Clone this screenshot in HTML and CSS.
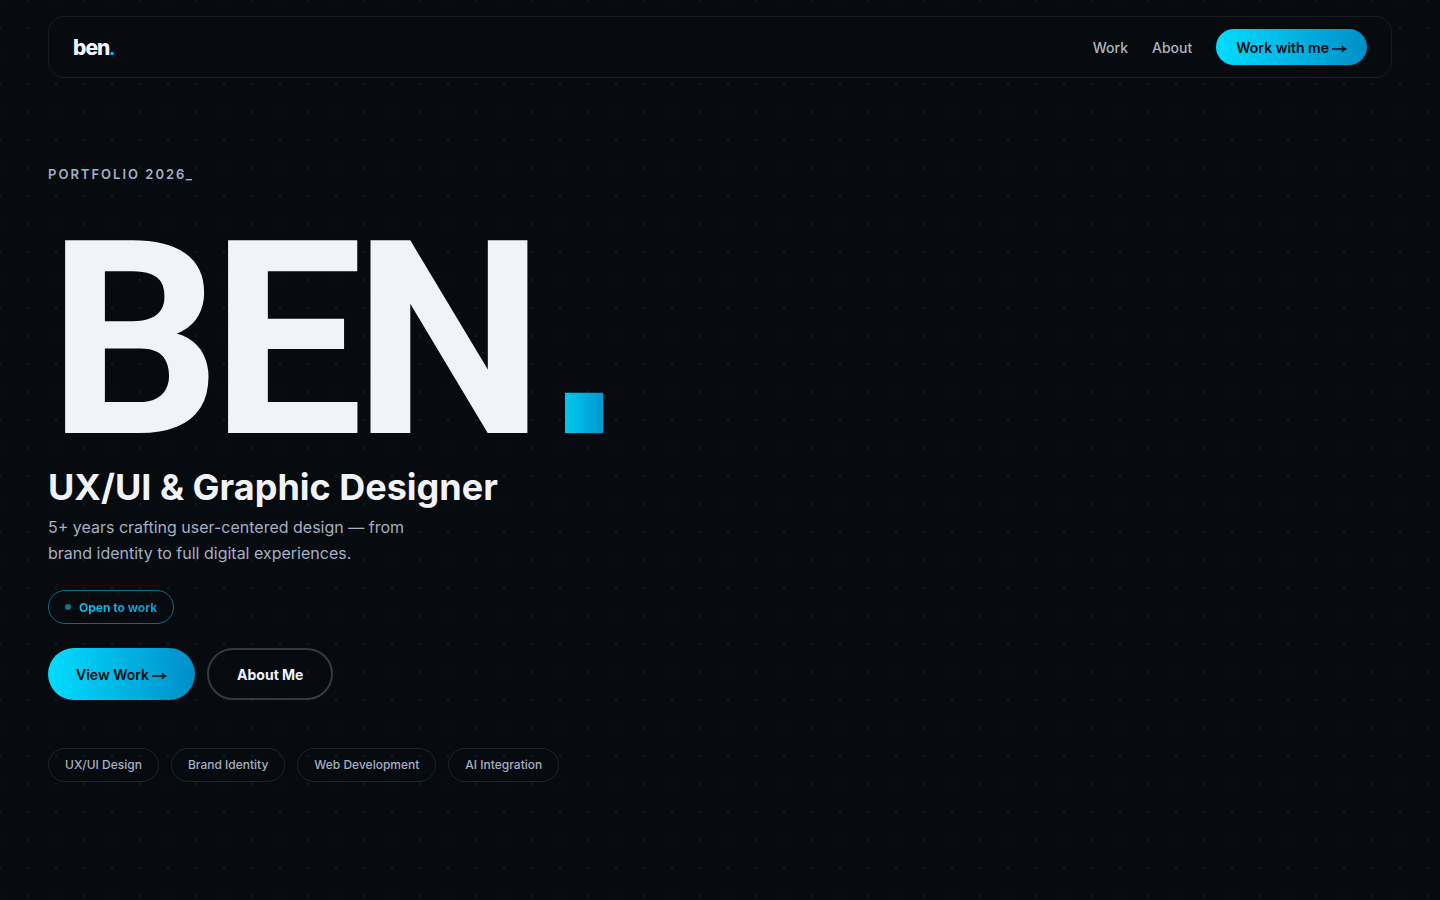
FILE: index.html
```html
<!DOCTYPE html>
<html lang="en">
<head>
    <meta charset="UTF-8">
    <meta name="viewport" content="width=device-width, initial-scale=1.0">
    <title>Ben. Portfolio</title>
    <link rel="stylesheet" href="styles.css">
</head>
<body>
    <header class="site-header">
        <nav class="navbar">
            <a href="#" class="logo">ben<span class="logo-dot">.</span></a>
            <div class="nav-links">
                <a href="#work" class="nav-link">Work</a>
                <a href="#about" class="nav-link">About</a>
                <a href="#contact" class="nav-cta">Work with me
                    <svg class="arrow" viewBox="0 0 16 10" aria-hidden="true"><path d="M1 5h13M11 2Q12 4 14.500 5Q12 6 11 8"/></svg>
                </a>
            </div>
        </nav>
    </header>

    <main class="hero">
        <p class="eyebrow">PORTFOLIO 2026_</p>
        <h1 class="hero-name">BEN<span class="hero-dot">.</span></h1>
        <h2 class="hero-role">UX/UI &amp; Graphic Designer</h2>
        <p class="hero-text">5+ years crafting user-centered design — from<br>brand identity to full digital experiences.</p>
        <div class="status"><span class="status-dot"></span><span class="status-label">Open to work</span></div>
        <div class="actions">
            <a href="#work" class="btn btn-primary">View Work
                <svg class="arrow" viewBox="0 0 16 10" aria-hidden="true"><path d="M1 5h13M11 2Q12 4 14.500 5Q12 6 11 8"/></svg>
            </a>
            <a href="#about" class="btn btn-outline">About Me</a>
        </div>
        <ul class="tags">
            <li>UX/UI Design</li>
            <li>Brand Identity</li>
            <li>Web Development</li>
            <li>AI Integration</li>
        </ul>
    </main>
</body>
</html>
```
FILE: styles.css
```css
:root {
    --bg: #070a0f;
    --text: #f0f4f9;
    --muted: #a3b0c4;
    --gradient: linear-gradient(90deg, #00dcff, #008fc8);
}
* {
    box-sizing: border-box;
    margin: 0;
    padding: 0;
}
body {
    min-height: 100vh;
    background-color: var(--bg);
    background-image: radial-gradient(circle, rgba(0, 220, 200, 0.1) 1px, transparent 1px);
    background-size: 28px 28px;
    background-position: 14px 14px;
    color: var(--text);
    font-family: Inter, sans-serif;
}
a {
    color: inherit;
    text-decoration: none;
}

/* Navigation */
.site-header {
    padding: 16px 48px 0;
}
.navbar {
    display: flex;
    align-items: center;
    justify-content: space-between;
    padding: 12px 24px;
    background: var(--bg);
    border: 1px solid #191c21;
    border-radius: 16px;
}
.logo {
    font-size: 21px;
    font-weight: 800;
    letter-spacing: -1px;
}
.logo-dot {
    color: #00b4e0;
    font-family: "Liberation Sans", sans-serif;
}
.nav-links {
    display: flex;
    align-items: center;
    gap: 24px;
    font-size: 14px;
    font-weight: 500;
}
.nav-link {
    color: #aab4be;
}
.nav-cta {
    display: flex;
    align-items: center;
    gap: 2px;
    height: 36px;
    padding: 0 20px;
    border-radius: 18px;
    background: var(--gradient);
    color: var(--bg);
    font-weight: 600;
}
.arrow {
    width: 16px;
    height: 10px;
    margin-top: 3px;
    fill: none;
    stroke: currentColor;
    stroke-width: 1.500;
}

/* Hero */
.hero {
    display: flex;
    flex-direction: column;
    align-items: flex-start;
    padding: 86px 48px;
}
.eyebrow {
    color: var(--muted);
    font-size: 13px;
    font-weight: 600;
    line-height: 20px;
    letter-spacing: 2px;
}
.hero-name {
    margin-top: 37px;
    font-family: Roboto, sans-serif;
    font-size: 271px;
    font-weight: 700;
    line-height: 240px;
    letter-spacing: -10px;
}
.hero-dot {
    margin-left: 12px;
    background: var(--gradient);
    background-clip: text;
    color: transparent;
    font-family: "Liberation Sans", sans-serif;
    line-height: 0;
}
.hero-role {
    margin-top: 4px;
    font-size: 36px;
    font-weight: 700;
    line-height: 44px;
}
.hero-text {
    margin-top: 5px;
    color: var(--muted);
    font-size: 16px;
    line-height: 26px;
}
.status {
    display: flex;
    align-items: center;
    gap: 8px;
    height: 34px;
    margin-top: 24px;
    padding: 0 16px;
    border: 1px solid #047084;
    border-radius: 17px;
    font-size: 12px;
    font-weight: 700;
}
.status-dot {
    width: 6px;
    height: 6px;
    border-radius: 50%;
    background: #047a8e;
}
.status-label {
    background: linear-gradient(90deg, #00c8f0, #009cd4);
    background-clip: text;
    color: transparent;
}
.actions {
    display: flex;
    gap: 12px;
    margin-top: 24px;
}
.btn {
    display: flex;
    align-items: center;
    gap: 2px;
    height: 52px;
    padding: 0 28px;
    border-radius: 26px;
    font-size: 14px;
    font-weight: 600;
}
.btn-primary {
    background: var(--gradient);
    color: var(--bg);
}
.btn-outline {
    border: 2px solid #38393e;
    font-weight: 700;
}
.tags {
    display: flex;
    flex-wrap: wrap;
    gap: 12px;
    margin-top: 48px;
    list-style: none;
}
.tags li {
    padding: 0 16px;
    border: 1px solid #20242a;
    border-radius: 17px;
    color: var(--muted);
    font-size: 12px;
    font-weight: 500;
    line-height: 32px;
}
```
